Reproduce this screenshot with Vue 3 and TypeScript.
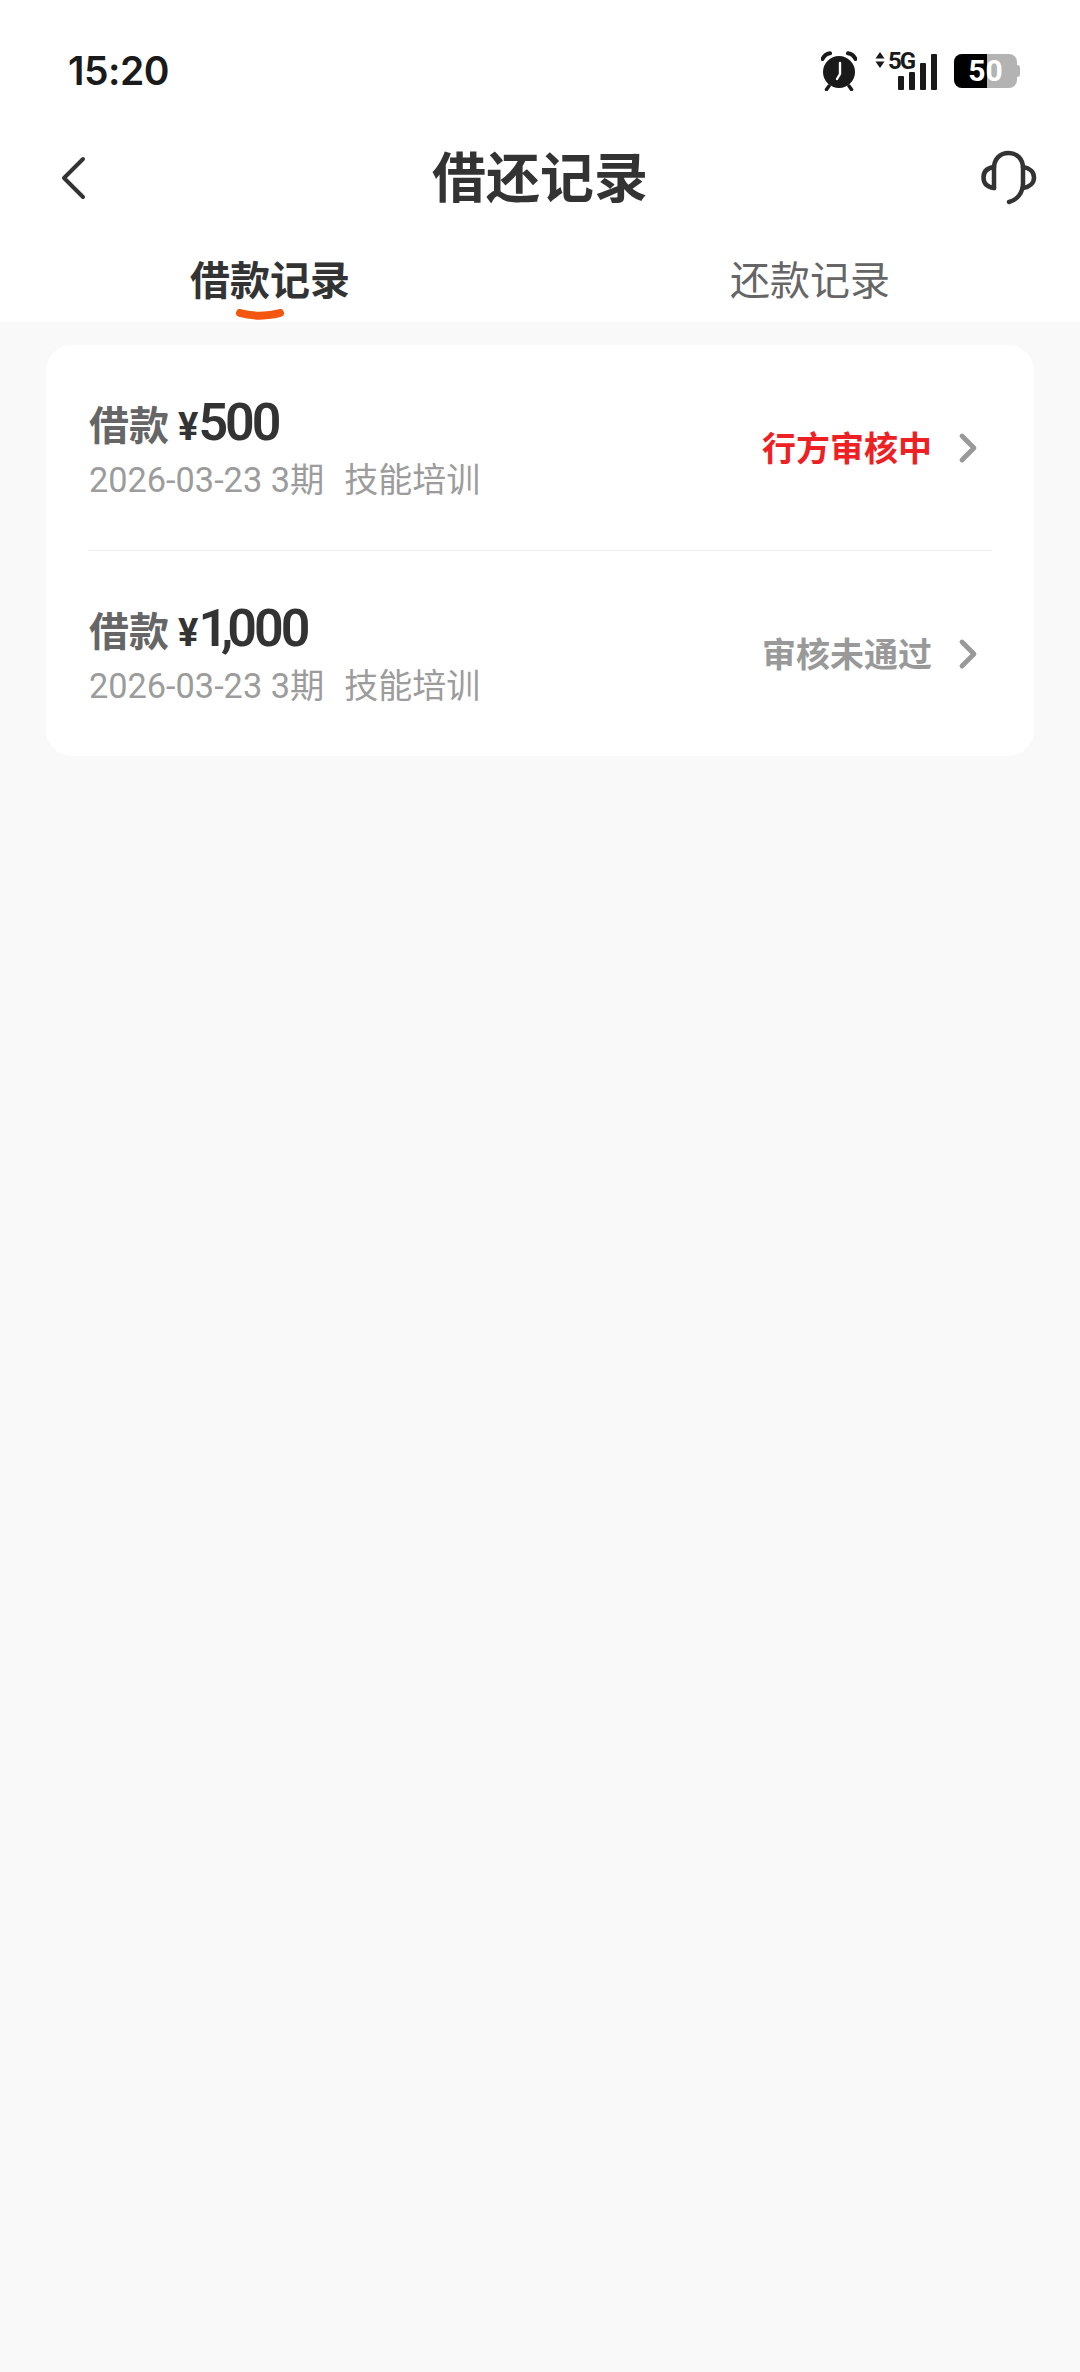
<script setup lang="ts">
interface LoanRecord {
  amount: string
  date: string
  term: string
  purpose: string
  status: string
  pending: boolean
}

const records: LoanRecord[] = [
  { amount: '500', date: '2026-03-23', term: '3期', purpose: '技能培训', status: '行方审核中', pending: true },
  { amount: '1,000', date: '2026-03-23', term: '3期', purpose: '技能培训', status: '审核未通过', pending: false },
]
</script>

<template>
  <div class="page">
    <div class="top">
      <div class="status-bar">
        <span class="time">15:20</span>
        <div class="status-icons">
          <svg class="alarm" width="36" height="40" viewBox="0 0 36 40">
            <circle cx="18" cy="21" r="16" fill="#1a1a1a" />
            <path d="M8 35l-2.500 3.500M28 35l2.500 3.500" stroke="#1a1a1a" stroke-width="3.500" stroke-linecap="round" />
            <path d="M1.500 8C3 4.500 5.500 2.800 9 2.200M34.500 8C33 4.500 30.500 2.800 27 2.200" stroke="#1a1a1a" stroke-width="4" fill="none" stroke-linecap="round" />
            <path d="M19 12v11l-3 5" stroke="#fff" stroke-width="2.400" fill="none" stroke-linecap="round" stroke-linejoin="round" />
          </svg>
          <div class="signal">
            <svg class="arrows" width="10" height="16" viewBox="0 0 10 16">
              <path d="M5 0l4.500 6.500H.5zM5 16L.5 9.500h9z" fill="#1a1a1a" />
            </svg>
            <span class="net">5G</span>
            <div class="bars">
              <i class="bar b1"></i>
              <i class="bar b2"></i>
              <i class="bar b3"></i>
              <i class="bar b4"></i>
            </div>
          </div>
          <div class="battery">
            <div class="battery-body">
              <div class="battery-fill"></div>
              <span class="battery-text">50</span>
            </div>
            <i class="battery-cap"></i>
          </div>
        </div>
      </div>

      <header class="nav">
        <svg class="back" width="26" height="44" viewBox="0 0 26 44">
          <path d="M23 3L4 22l19 19" stroke="#333" stroke-width="4" fill="none" stroke-linecap="round" stroke-linejoin="round" />
        </svg>
        <h1 class="title">借还记录</h1>
        <svg class="headset" width="56" height="56" viewBox="0 0 56 56">
          <path d="M13 38V18C13 9 19 3 27.500 3S42 9 42 18v15c0 10-6 17-14 19" stroke="#333" stroke-width="4.500" fill="none" stroke-linecap="round" />
          <path d="M13 17C6 18 2.500 22 2.500 27.500S6 37 13 38M42 17c7 1 11 5 11 10.500S49 37 42 38" stroke="#333" stroke-width="4.500" fill="none" stroke-linecap="round" />
        </svg>
      </header>

      <nav class="tabs">
        <div class="tab active">
          借款记录
          <svg class="tab-mark" width="48" height="13" viewBox="0 0 48 13">
            <path d="M4 4C16 7.500 32 7.500 44 4" stroke="#f4560f" stroke-width="8" fill="none" stroke-linecap="round" />
          </svg>
        </div>
        <div class="tab">还款记录</div>
      </nav>
    </div>

    <main class="content">
      <section class="card">
        <article v-for="item in records" :key="item.amount" class="row">
          <div class="info">
            <p class="headline">
              <span class="kind">借款</span>
              <span class="yen">¥</span>
              <span class="amount">
                <template v-for="(part, i) in item.amount.split(',')" :key="i"><span v-if="i" class="comma">,</span>{{ part }}</template>
              </span>
            </p>
            <p class="meta">
              {{ item.date }} {{ item.term }}<span class="purpose">{{ item.purpose }}</span>
            </p>
          </div>
          <span class="state" :class="{ pending: item.pending }">{{ item.status }}</span>
          <svg class="arrow" width="20" height="32" viewBox="0 0 20 32">
            <path d="M4 4l12 12L4 28" stroke="#999" stroke-width="4.800" fill="none" stroke-linecap="round" stroke-linejoin="round" />
          </svg>
        </article>
      </section>
    </main>
  </div>
</template>

<style>
body {
  background: #f9f9f9;
}
</style>

<style scoped>
.page {
  min-height: 2372px;
  background: #f9f9f9;
  color: #333;
  font-family: Roboto, "Noto Sans CJK SC", sans-serif;
}

.top {
  background: #fff;
}

.status-bar {
  display: flex;
  align-items: center;
  justify-content: space-between;
  height: 120px;
  padding: 10px 60px 2px 68px;
}

.time {
  font-family: Inter, Roboto, sans-serif;
  font-size: 39px;
  font-weight: 600;
  letter-spacing: -0.5px;
  color: #1a1a1a;
}

.status-icons {
  display: flex;
  align-items: center;
  padding-top: 2px;
}

.signal {
  position: relative;
  width: 62px;
  height: 38px;
  margin-left: 18px;
}

.arrows {
  position: absolute;
  left: 0;
  top: 0;
}

.net {
  position: absolute;
  left: 13px;
  top: -3px;
  font-size: 24px;
  font-weight: 700;
  line-height: 24px;
  letter-spacing: -2px;
  color: #1a1a1a;
}

.bars {
  position: absolute;
  right: 0;
  bottom: 0;
  display: flex;
  align-items: flex-end;
  gap: 5px;
}

.bar {
  display: block;
  width: 6px;
  background: #1a1a1a;
  border-radius: 1px;
}

.b1 { height: 14px; }
.b2 { height: 18px; }
.b3 { height: 27px; }
.b4 { height: 36px; }

.battery {
  display: flex;
  align-items: center;
  margin-left: 17px;
}

.battery-body {
  position: relative;
  display: flex;
  align-items: center;
  justify-content: center;
  width: 63px;
  height: 34px;
  border-radius: 8px;
  background: #b3b3b3;
  overflow: hidden;
}

.battery-fill {
  position: absolute;
  left: 0;
  top: 0;
  bottom: 0;
  width: 33px;
  background: #000;
}

.battery-text {
  position: relative;
  font-size: 30px;
  font-weight: 700;
  line-height: 34px;
  color: #fff;
}

.battery-cap {
  display: block;
  width: 3px;
  height: 12px;
  background: #b3b3b3;
  border-radius: 0 3px 3px 0;
}

.nav {
  display: flex;
  align-items: center;
  justify-content: space-between;
  height: 92px;
  padding: 0 43px 0 60px;
  position: relative;
}

.title {
  position: absolute;
  left: 0;
  right: 0;
  margin: 0;
  padding-top: 3px;
  text-align: center;
  font-size: 54px;
  font-weight: 700;
  line-height: 92px;
  color: #333;
}

.tabs {
  display: flex;
  height: 98px;
}

.tab {
  position: relative;
  flex: 1;
  text-align: center;
  font-size: 40px;
  line-height: 58px;
  padding-top: 29px;
  color: #666;
}

.tab.active {
  font-weight: 700;
  color: #333;
}

.tab-mark {
  position: absolute;
  left: 236px;
  bottom: 0;
}

.content {
  padding: 23px 46px 0;
}

.card {
  padding: 0 42px 0 43px;
  background: #fff;
  border-radius: 26px;
}

.row {
  display: flex;
  align-items: center;
  height: 205px;
}

.row + .row {
  border-top: 1px solid #eee;
}

.info {
  flex: 1;
  padding-top: 3px;
}

.headline {
  display: flex;
  align-items: baseline;
  margin: 0;
  height: 54px;
  line-height: 54px;
}

.kind {
  font-size: 40px;
  font-weight: 700;
  color: #666;
}

.yen {
  margin-left: 9px;
  font-size: 38px;
  font-weight: 700;
}

.amount {
  font-size: 52px;
  font-weight: 600;
  letter-spacing: -3px;
}

.comma {
  margin: 0 -3px 0 -4px;
}

.meta {
  margin: 7px 0 0;
  font-size: 34.3px;
  line-height: 46px;
  color: #9c9c9c;
}

.purpose {
  margin-left: 20px;
  font-size: 34px;
}

.state {
  padding-bottom: 2px;
  font-size: 34px;
  font-weight: 700;
  color: #999;
}

.state.pending {
  color: #ed2024;
}

.arrow {
  margin-left: 26px;
  margin-right: 14px;
}
</style>
